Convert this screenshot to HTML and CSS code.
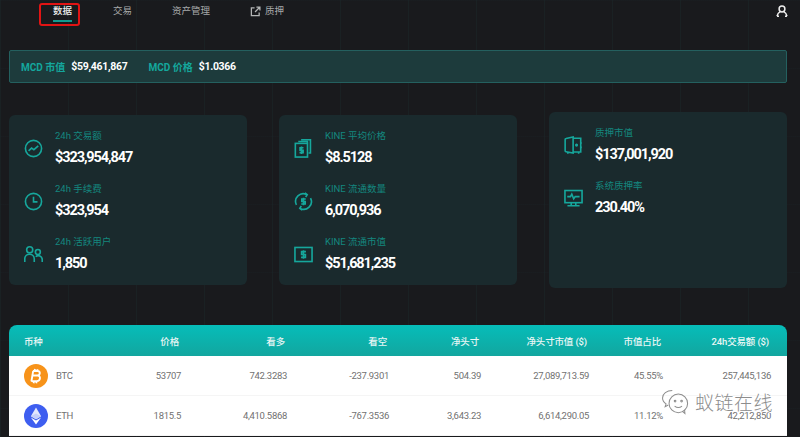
FILE: index.html
```html
<!DOCTYPE html>
<html lang="en">
<head>
    <meta charset="UTF-8">
    <meta name="viewport" content="width=device-width, initial-scale=1.0">
    <title>数据</title>
    <link rel="stylesheet" href="styles.css">
</head>
<body>
    <nav class="nav">
        <a class="nav-item nav-active">数据</a>
        <a class="nav-item nav-trade">交易</a>
        <a class="nav-item nav-assets">资产管理</a>
        <a class="nav-item nav-stake">
            <svg class="nav-icon" viewBox="0 0 12 12"><path d="M5 2H1.5v8.5H10V7M7 1.2h3.8V5M10.6 1.4 5.5 6.5"/></svg>
            质押
        </a>
        <svg class="user-icon" viewBox="0 0 12 12"><circle cx="6" cy="4" r="2.9"/><path d="M1 11.2C1.6 8.6 3 7.2 4.2 6.6M11 11.2C10.4 8.6 9 7.2 7.8 6.6M1 11.2h2M11 11.2H9"/></svg>
    </nav>

    <div class="banner">
        <span class="banner-label">MCD 市值</span><span class="banner-value">$59,461,867</span>
        <span class="banner-label banner-second">MCD 价格</span><span class="banner-value">$1.0366</span>
    </div>

    <div class="cards">
        <div class="card">
            <div class="stat">
                <svg class="stat-icon" viewBox="0 0 20 20"><circle cx="10" cy="10" r="8.5"/><path d="M4.8 12.4 8 9.6l2.4 1.6 4.6-4"/></svg>
                <div><div class="stat-label">24h 交易额</div><div class="stat-value">$323,954,847</div></div>
            </div>
            <div class="stat">
                <svg class="stat-icon" viewBox="0 0 20 20"><circle cx="10" cy="10" r="8.5"/><path d="M10 5v5.4h4.2"/></svg>
                <div><div class="stat-label">24h 手续费</div><div class="stat-value">$323,954</div></div>
            </div>
            <div class="stat">
                <svg class="stat-icon" viewBox="0 0 20 20"><circle cx="6" cy="5" r="3.2"/><circle cx="14.6" cy="7.4" r="2.6"/><path d="M.8 18v-3.4a5 5 0 0 1 10 0V18M12.4 12.4a4 4 0 0 1 6.8 2.8V18"/></svg>
                <div><div class="stat-label">24h 活跃用户</div><div class="stat-value">1,850</div></div>
            </div>
        </div>
        <div class="card">
            <div class="stat">
                <svg class="stat-icon" viewBox="0 0 20 20"><path d="M4.5 2.6h9.6v2M7.5.8h9.8v14h-2"/><rect x="1.4" y="4.6" width="12.8" height="14.4"/><path d="M10 9.2H6.4v2.6h3.2v2.6H5.8M7.9 7.8v8"/></svg>
                <div><div class="stat-label">KINE 平均价格</div><div class="stat-value">$8.5128</div></div>
            </div>
            <div class="stat">
                <svg class="stat-icon" viewBox="0 0 20 20"><path d="M2.6 13.5A8 8 0 0 1 13.5 2.8M17.4 6.5A8 8 0 0 1 6.5 17.2M11.5 1l2.4 1.9-1.6 2.4M8.5 19l-2.4-1.9 1.6-2.4"/><path d="M12.4 7.4H8.2v2.6h3.6v2.6H7.6M10 6v8"/></svg>
                <div><div class="stat-label">KINE 流通数量</div><div class="stat-value">6,070,936</div></div>
            </div>
            <div class="stat">
                <svg class="stat-icon" viewBox="0 0 20 20"><rect x="1" y="2.6" width="18" height="14.8"/><path d="M12.6 7H8v3h4v3H7.4M10 5.4v9.2"/></svg>
                <div><div class="stat-label">KINE 流通市值</div><div class="stat-value">$51,681,235</div></div>
            </div>
        </div>
        <div class="card card-tall">
            <div class="stat">
                <svg class="stat-icon" viewBox="0 0 20 20"><path d="M2.2 2.6 9.6 1v17l-7.4-1.4a1.2 1.2 0 0 1-1-1.2V3.8a1.2 1.2 0 0 1 1-1.2ZM9.6 2.4h8v14.4h-8M17.6 7.4h1.2M17.6 12h1.2M4 17v1.6M15.4 17v1.6"/><circle cx="13.2" cy="9.6" r=".8"/></svg>
                <div><div class="stat-label">质押市值</div><div class="stat-value">$137,001,920</div></div>
            </div>
            <div class="stat">
                <svg class="stat-icon" viewBox="0 0 20 20"><rect x="1" y="1.6" width="18" height="12.8"/><path d="M3.4 8h3.4l1.4-2.6 2 5 1.6-2.4h4.6M7.6 14.4v2.4M12.4 14.4v2.4M3.6 17.6h12.8"/></svg>
                <div><div class="stat-label">系统质押率</div><div class="stat-value">230.40%</div></div>
            </div>
        </div>
    </div>

    <table class="market">
        <colgroup>
            <col class="col-coin"><col class="col-price"><col class="col-long"><col class="col-short">
            <col class="col-net"><col class="col-netval"><col class="col-share"><col class="col-vol">
        </colgroup>
        <thead>
            <tr>
                <th class="th-coin">币种</th><th>价格</th><th>看多</th><th>看空</th>
                <th>净头寸</th><th>净头寸市值 ($)</th><th>市值占比</th><th class="th-vol">24h交易额 ($)</th>
            </tr>
        </thead>
        <tbody>
            <tr>
                <td class="td-coin">
                    <div class="coin">
                        <svg class="coin-icon" viewBox="0 0 24 24"><circle cx="12" cy="12" r="12" fill="#f7931a"/><path fill="none" stroke="#fff" stroke-width="1.9" d="M9.2 6.8 7.4 17.4M9 7h4.6c3 .2 2.9 4.3-.4 4.5H8.4M8.4 11.5h5.4c3.2.3 2.8 5.4-.9 5.6H7.2M11 5l-.4 2.2M13.6 5.3l-.4 2M10 17.2l-.4 2M12.6 17.2l-.4 2"/></svg>
                        BTC
                    </div>
                </td>
                <td>53707</td><td>742.3283</td><td>-237.9301</td><td>504.39</td><td>27,089,713.59</td><td>45.55%</td><td class="td-vol">257,445,136</td>
            </tr>
            <tr>
                <td class="td-coin">
                    <div class="coin">
                        <svg class="coin-icon" viewBox="0 0 24 24"><circle cx="12" cy="12" r="12" fill="#3e5ef0"/><path fill="#fff" fill-opacity=".85" d="M12 3.6 6.9 12.2 12 15.2l5.1-3Z"/><path fill="#fff" d="M12 16.4 6.9 13.4 12 20.4l5.1-7Z"/><path fill="#c5cffa" d="M12 9.6 6.9 12.2 12 15.2l5.1-3Z"/></svg>
                        ETH
                    </div>
                </td>
                <td>1815.5</td><td>4,410.5868</td><td>-767.3536</td><td>3,643.23</td><td>6,614,290.05</td><td>11.12%</td><td class="td-vol">42,212,850</td>
            </tr>
        </tbody>
    </table>

    <div class="watermark">
        <svg class="watermark-icon" viewBox="0 0 32 28"><path d="M12 1.5C6 1.5 1.5 5 1.5 9.6c0 2.6 1.4 4.8 3.8 6.4l-1 3 3.4-1.8"/><circle cx="18.5" cy="15.5" r="10"/><path d="m23 24 2.6 2.4-.4-4"/><circle cx="15" cy="13" r=".9"/><circle cx="22" cy="13" r=".9"/><path d="M14.5 18.5c2.4 1.8 5.6 1.8 8 0"/></svg>
        <span>蚁链在线</span>
    </div>
</body>
</html>
```

FILE: styles.css
```css
html, body {
    height: 437px;
    overflow: hidden;
}
body {
    position: relative;
    margin: 0;
    padding: 0 13px 0 9px;
    background-color: #191a1d;
    background-image:
        linear-gradient(90deg, rgba(30, 60, 62, 0.2) 1px, transparent 1px),
        linear-gradient(rgba(30, 60, 62, 0.08) 1px, transparent 1px);
    background-size: 68px 68px;
    font-family: "Roboto", "Noto Sans CJK SC", sans-serif;
    color: #fff;
}

/* top nav */
.nav {
    display: flex;
    align-items: center;
    height: 50px;
    padding-bottom: 28px;
    padding-left: 44px;
    box-sizing: border-box;
    font-size: 9.5px;
    color: #a7a9a9;
}
.nav-item {
    position: relative;
    display: flex;
    align-items: center;
    line-height: 12px;
}
.nav-active {
    color: #eee;
    font-weight: 500;
}
.nav-active::before {
    content: "";
    position: absolute;
    left: -14px;
    top: -2px;
    width: 37px;
    height: 19px;
    border: 2px solid #e11414;
    border-radius: 3px;
}
.nav-active::after {
    content: "";
    position: absolute;
    left: 0;
    right: 0;
    bottom: -5px;
    height: 2px;
    background-color: #129a8f;
}
.nav-trade { margin-left: 41px; }
.nav-assets { margin-left: 40px; }
.nav-stake { margin-left: 40px; }
.nav-icon {
    width: 11px;
    height: 11px;
    margin-right: 4px;
    fill: none;
    stroke: #b4b6b6;
    stroke-width: 1.4;
}
.user-icon {
    width: 12px;
    height: 12px;
    margin-left: auto;
    margin-right: -1px;
    fill: none;
    stroke: #eee;
    stroke-width: 1.5;
}

/* MCD banner */
.banner {
    display: flex;
    align-items: center;
    height: 33px;
    padding-left: 11px;
    box-sizing: border-box;
    background-color: #1d3b3c;
    border: 1px solid #24605f;
    border-radius: 2px;
    font-size: 10px;
    font-weight: 700;
}
.banner-label {
    color: #14a79d;
    margin-right: 6px;
}
.banner-value {
    font-size: 10.5px;
    letter-spacing: -0.3px;
}
.banner-second {
    margin-left: 21px;
}

/* stat cards */
.cards {
    display: flex;
    justify-content: space-between;
    align-items: center;
    margin-top: 29px;
}
.card {
    display: flex;
    flex-direction: column;
    gap: 13px;
    width: 238px;
    height: 170px;
    padding: 13px 0 0 15px;
    box-sizing: border-box;
    background-color: #1a2a2d;
    border-radius: 6px;
}
.card-tall {
    height: 176px;
}
.stat {
    display: flex;
    align-items: center;
    height: 40px;
}
.stat-icon {
    width: 19px;
    height: 19px;
    margin-right: 12px;
    flex: none;
    fill: none;
    stroke: #16a79c;
    stroke-width: 1.7;
}
.stat-label {
    font-size: 9.5px;
    line-height: 12px;
    color: #14877f;
}
.stat-value {
    margin-top: 7px;
    font-size: 14.5px;
    line-height: 18px;
    font-weight: 700;
    letter-spacing: -1.1px;
}

/* market table */
.market {
    width: 778px;
    margin-top: 37px;
    table-layout: fixed;
    border-collapse: separate;
    border-spacing: 0;
    font-size: 9.5px;
}
.col-coin { width: 100px; }
.col-price { width: 72px; }
.col-long { width: 106px; }
.col-short { width: 102px; }
.col-net { width: 92px; }
.col-netval { width: 108px; }
.col-share { width: 74px; }
.col-vol { width: 124px; }
.market th {
    height: 31px;
    padding: 0 2px 0 0;
    text-align: right;
    font-weight: 500;
    letter-spacing: -0.15px;
    color: #e9f6f5;
    background: linear-gradient(#06bdb9, #12a69f);
    white-space: nowrap;
}
.market th:first-child {
    border-top-left-radius: 8px;
}
.market th:last-child {
    border-top-right-radius: 8px;
}
.market .th-coin {
    text-align: left;
    padding-left: 15px;
}
.market .th-vol {
    padding-right: 18px;
}
.market td {
    height: 39px;
    padding: 0;
    text-align: right;
    color: #717171;
    letter-spacing: -0.3px;
    background-color: #fff;
    border-bottom: 1px solid #f5f5f5;
    white-space: nowrap;
}
.market .td-coin {
    text-align: left;
    padding-left: 15px;
}
.market .td-vol {
    padding-right: 16px;
}
.coin {
    display: flex;
    align-items: center;
    gap: 8px;
}
.coin-icon {
    width: 24px;
    height: 24px;
}

/* watermark over the table */
.watermark {
    position: absolute;
    left: 660px;
    top: 389px;
    display: flex;
    align-items: center;
    gap: 3px;
    font-family: "Noto Sans CJK SC", sans-serif;
    font-size: 19px;
    font-weight: 300;
    line-height: 26px;
    letter-spacing: 0.5px;
    color: #8d8d8d;
    text-shadow: 1px 0 #fff, -1px 0 #fff, 0 1px #fff, 0 -1px #fff;
}
.watermark-icon {
    width: 32px;
    height: 26px;
    fill: none;
    stroke: #8d8d8d;
    stroke-width: 1.1;
}
```
